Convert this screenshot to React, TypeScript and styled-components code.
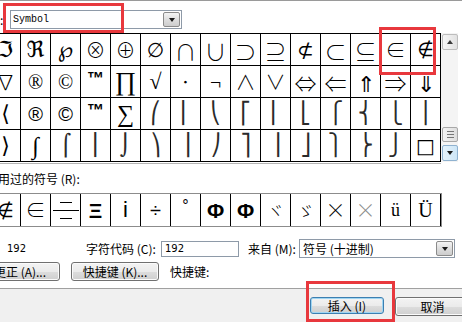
import styled, { createGlobalStyle } from "styled-components";

const GlobalStyle = createGlobalStyle`
  html, body {
    margin: 0;
    padding: 0;
    background: #fff;
  }
  body {
    font-family: "Noto Sans CJK SC", "DejaVu Sans", sans-serif;
  }
`;

const fonts: Record<string, string> = {
  serif: `"Liberation Serif", "DejaVu Serif", "DejaVu Sans", serif`,
  sans: `"Liberation Sans", "DejaVu Sans", sans-serif`,
  math: `"DejaVu Sans", "Liberation Sans", sans-serif`,
  cjk: `"Noto Sans CJK JP", "Noto Sans CJK SC", "DejaVu Sans", sans-serif`,
};

type Glyph = { c: string; f?: string; s?: number; tone?: string; lift?: number; bold?: boolean };

const g = (c: string, f?: string, s?: number, lift?: number): Glyph => ({ c, f, s, lift });
const piece = (c: string): Glyph => ({ c, f: "math", s: 21, tone: "#2a2a2a" });

const table: Glyph[][] = [
  [g("ℑ", "serif", 22), g("ℜ", "serif", 22), g("℘", "serif", 22), g("⊗", "cjk", 20), g("⊕", "cjk", 20), g("∅", "serif", 20), g("∩", "cjk", 22), g("∪", "cjk", 22), g("⊃", "cjk", 22), g("⊇", "cjk", 22), g("⊄", "math", 20), g("⊂", "cjk", 22), g("⊆", "cjk", 22), g("∈", "cjk", 20), g("∉", "math", 19)],
  [g("∇", "cjk", 20), g("®", "serif", 20), g("©", "serif", 20), { c: "™", f: "sans", s: 17, lift: 7, bold: true }, g("∏", "serif", 26), g("√", "serif", 22), g("⋅", "serif", 20), g("¬", "cjk", 20), g("∧", "cjk", 20), g("∨", "cjk", 20), g("⇔", "cjk", 22), g("⇐", "cjk", 22), g("⇑", "cjk", 22), g("⇒", "cjk", 22), g("⇓", "cjk", 22)],
  [g("⟨", "math", 22), g("®", "sans", 20), g("©", "sans", 20), { c: "™", f: "sans", s: 17, lift: 7, bold: true }, g("∑", "serif", 24), piece("⎛"), piece("⎜"), piece("⎝"), piece("⎡"), piece("⎢"), piece("⎣"), piece("⎧"), piece("⎨"), piece("⎩"), piece("⎪")],
  [g("⟩", "math", 22), g("∫", "serif", 24), piece("⌠"), piece("⎮"), piece("⌡"), piece("⎞"), piece("⎟"), piece("⎠"), piece("⎤"), piece("⎥"), piece("⎦"), piece("⎫"), piece("⎬"), piece("⎭"), g("□", "math", 20)],
];

const recent: Glyph[] = [
  g("∉", "math", 19),
  g("∈", "cjk", 20),
  g("", "bars"),
  { c: "Ξ", f: "sans", s: 21, bold: true },
  g("i", "sans", 22),
  g("÷", "sans", 20),
  g("°", "sans", 16, 9),
  { c: "Φ", f: "sans", s: 21, bold: true },
  { c: "Φ", f: "sans", s: 21, bold: true },
  g("ヾ", "cjk", 18),
  g("ゞ", "cjk", 18),
  g("×", "cjk", 20),
  { c: "×", f: "cjk", s: 20, tone: "#8a8a8a" },
  g("ü", "serif", 18),
  g("Ü", "serif", 20),
];

const Frame = styled.div`
  position: relative;
  width: 462px;
  height: 322px;
  overflow: hidden;
  background: #fff;
  display: flex;
  flex-direction: column;
`;

const TopRule = styled.div`
  height: 1px;
  background: #9a9a9a;
`;

const FontRow = styled.div`
  height: 32px;
  box-sizing: border-box;
  padding-top: 9px;
  display: flex;
  align-items: flex-start;
`;

const Colon = styled.span`
  width: 10px;
  font-size: 12px;
  line-height: 19px;
  color: #000;
`;

const Combo = styled.div<{ $w: number }>`
  width: ${({ $w }) => $w}px;
  height: 19px;
  box-sizing: border-box;
  border: 1px solid #8e9aa8;
  background: #fff;
  display: flex;
  align-items: center;
  justify-content: space-between;
`;

const ComboText = styled.span<{ $mono?: boolean }>`
  padding-left: ${({ $mono }) => ($mono ? 2 : 3)}px;
  font-family: ${({ $mono }) =>
    $mono ? `"Liberation Mono", "DejaVu Sans Mono", monospace` : `"Noto Sans CJK SC", sans-serif`};
  font-size: ${({ $mono }) => ($mono ? 10 : 12)}px;
  color: #000;
  white-space: nowrap;
`;

const DropButton = styled.div`
  width: 17px;
  height: 15px;
  margin-right: 1px;
  box-sizing: border-box;
  border: 1px solid #8b8b8b;
  border-radius: 2px;
  background: linear-gradient(#f4f4f4, #dcdcdc 55%, #cdcdcd);
  display: flex;
  align-items: center;
  justify-content: center;
`;

const Arrow = styled.span<{ $up?: boolean }>`
  width: 0;
  height: 0;
  border-left: 3.5px solid transparent;
  border-right: 3.5px solid transparent;
  ${({ $up }) => ($up ? "border-bottom: 4px solid #3a3a3a;" : "border-top: 4px solid #1a1a1a;")}
`;

const SymbolArea = styled.div`
  display: flex;
  height: 129px;
`;

const CharGrid = styled.div`
  margin-left: -9px;
  display: grid;
  grid-template-columns: repeat(15, 29px);
  grid-auto-rows: 31px;
  gap: 1px;
  padding: 1px 1px 1px 0;
  background: #000;
`;

const Cell = styled.div<{ $font?: string; $size?: number; $tone?: string; $lift?: number; $bold?: boolean }>`
  background: #fff;
  display: flex;
  align-items: center;
  justify-content: center;
  overflow: hidden;
  font-family: ${({ $font }) => fonts[$font ?? "serif"] ?? fonts.serif};
  font-size: ${({ $size }) => $size ?? 20}px;
  font-weight: ${({ $bold, $font }) => ($bold ? 700 : $font === "cjk" ? 300 : 400)};
  color: ${({ $tone }) => $tone ?? "#000"};
  line-height: 1;
  padding-bottom: ${({ $lift }) => $lift ?? 0}px;
  box-sizing: border-box;
`;

const Bars = styled.div`
  display: flex;
  flex-direction: column;
  align-items: center;
  gap: 7px;
  width: 100%;
`;

const Bar = styled.span<{ $long?: boolean }>`
  height: 1px;
  width: ${({ $long }) => ($long ? 26 : 12)}px;
  background: #000;
`;

const ScrollBar = styled.div`
  width: 17px;
  box-sizing: border-box;
  padding: 1px 0 1px 1px;
  background: #f4f4f4;
  display: flex;
  flex-direction: column;
`;

const ScrollButton = styled.div<{ $hot?: boolean }>`
  height: 16px;
  box-sizing: border-box;
  border: 1px solid ${({ $hot }) => ($hot ? "#8fb2d0" : "#bdbdbd")};
  border-radius: 2px;
  background: ${({ $hot }) =>
    $hot ? "linear-gradient(90deg, #e4f2fb, #cde6f7)" : "linear-gradient(90deg, #f6f6f6, #e2e2e2)"};
  display: flex;
  align-items: center;
  justify-content: center;
`;

const Track = styled.div`
  flex: 1;
  display: flex;
  flex-direction: column;
  justify-content: flex-end;
  padding-bottom: 3px;
`;

const Thumb = styled.div`
  height: 15px;
  box-sizing: border-box;
  border: 1px solid #a8a8a8;
  border-radius: 2px;
  background: linear-gradient(90deg, #f3f3f3, #dedede);
  display: flex;
  flex-direction: column;
  align-items: center;
  justify-content: center;
  gap: 2px;
`;

const Grip = styled.span`
  width: 7px;
  height: 1px;
  background: #777;
`;

const GridUnderline = styled.div`
  height: 1px;
  width: 441px;
  margin-top: 1px;
  background: #b4b4b4;
`;

const RecentLabel = styled.div`
  margin: 8px 0 0 -14px;
  height: 21px;
  font-size: 12px;
  line-height: 14px;
  color: #000;
  white-space: nowrap;
`;

const RecentRow = styled.div`
  margin-left: -9px;
  width: max-content;
  display: grid;
  grid-template-columns: repeat(15, 29px);
  grid-auto-rows: 32px;
  gap: 1px;
  background: #000;
  border-top: 1px solid #8c8c8c;
  border-bottom: 1px solid #8c8c8c;
  border-right: 1px solid #8c8c8c;
  padding-right: 1px;
`;

const CodeRow = styled.div`
  margin-top: 12px;
  height: 19px;
  display: flex;
  align-items: center;
  padding-left: 7px;
`;

const Field = styled.span<{ $w: number }>`
  width: ${({ $w }) => $w}px;
  flex: none;
  font-size: 12px;
  color: #000;
  white-space: nowrap;
`;

const NumberText = styled.span<{ $w?: number }>`
  width: ${({ $w }) => ($w ? `${$w}px` : "auto")};
  flex: none;
  font-family: "DejaVu Sans", "Liberation Sans", sans-serif;
  font-size: 10px;
  color: #000;
`;

const TextInput = styled.div<{ $w: number }>`
  width: ${({ $w }) => $w}px;
  height: 16px;
  flex: none;
  box-sizing: border-box;
  border: 1px solid #8e9aa8;
  background: #fff;
  display: flex;
  align-items: center;
  padding-left: 3px;
  margin-right: 9px;
`;

const ButtonRow = styled.div`
  margin-top: 4px;
  height: 19px;
  display: flex;
  align-items: center;
  gap: 11px;
`;

const PushButton = styled.button<{ $w: number; $primary?: boolean }>`
  width: ${({ $w }) => $w}px;
  height: ${({ $primary }) => ($primary ? 17 : 19)}px;
  flex: none;
  margin: 0;
  padding: 0;
  box-sizing: border-box;
  border: 1px solid ${({ $primary }) => ($primary ? "#3c7fb1" : "#707070")};
  border-radius: 3px;
  background: linear-gradient(#f3f3f3, #ebebeb 50%, #dddddd 51%, #cfcfcf);
  box-shadow: ${({ $primary }) => ($primary ? "inset 0 0 0 1px #9fd5f2" : "inset 0 0 0 1px #fbfbfb")};
  font-family: "Noto Sans CJK SC", sans-serif;
  font-size: 12px;
  line-height: 1;
  color: #000;
`;

const LeftCut = styled(PushButton)`
  margin-left: -20px;
`;

const ShortcutLabel = styled.span`
  font-size: 12px;
  color: #000;
  white-space: nowrap;
`;

const Separator = styled.div`
  margin-top: 7px;
  height: 1px;
  background: #a0a0a0;
`;

const Footer = styled.div`
  flex: 1;
  background: #f0f0f0;
  display: flex;
  justify-content: flex-end;
  align-items: flex-start;
  padding-top: 8px;
  gap: 11px;
`;

const CancelButton = styled(PushButton)`
  margin-right: -8px;
`;

const Highlight = styled.div<{ $x: number; $y: number; $w: number; $h: number }>`
  position: absolute;
  left: ${({ $x }) => $x}px;
  top: ${({ $y }) => $y}px;
  width: ${({ $w }) => $w}px;
  height: ${({ $h }) => $h}px;
  box-sizing: border-box;
  border: 3px solid #e8383d;
  pointer-events: none;
`;

const GlyphCell = ({ glyph }: { glyph: Glyph }) =>
  glyph.f === "bars" ? (
    <Cell>
      <Bars>
        <Bar />
        <Bar $long />
        <Bar />
      </Bars>
    </Cell>
  ) : (
    <Cell $font={glyph.f} $size={glyph.s} $tone={glyph.tone} $lift={glyph.lift} $bold={glyph.bold}>
      {glyph.c}
    </Cell>
  );

export default function App() {
  return (
    <>
      <GlobalStyle />
      <Frame>
        <TopRule />
        <FontRow>
          <Colon>:</Colon>
          <Combo $w={172}>
            <ComboText $mono>Symbol</ComboText>
            <DropButton>
              <Arrow />
            </DropButton>
          </Combo>
        </FontRow>

        <SymbolArea>
          <CharGrid>
            {table.flat().map((glyph, i) => (
              <GlyphCell key={i} glyph={glyph} />
            ))}
          </CharGrid>
          <ScrollBar>
            <ScrollButton>
              <Arrow $up />
            </ScrollButton>
            <Track>
              <Thumb>
                <Grip />
                <Grip />
                <Grip />
              </Thumb>
            </Track>
            <ScrollButton $hot>
              <Arrow />
            </ScrollButton>
          </ScrollBar>
        </SymbolArea>
        <GridUnderline />

        <RecentLabel>使用过的符号 (R):</RecentLabel>
        <RecentRow>
          {recent.map((glyph, i) => (
            <GlyphCell key={i} glyph={glyph} />
          ))}
        </RecentRow>

        <CodeRow>
          <NumberText $w={79}>192</NumberText>
          <Field $w={75}>字符代码 (C):</Field>
          <TextInput $w={78}>
            <NumberText>192</NumberText>
          </TextInput>
          <Field $w={51}>来自 (M):</Field>
          <Combo $w={156}>
            <ComboText>符号 (十进制)</ComboText>
            <DropButton>
              <Arrow />
            </DropButton>
          </Combo>
        </CodeRow>

        <ButtonRow>
          <LeftCut $w={80}>更正 (A)...</LeftCut>
          <PushButton $w={88}>快捷键 (K)...</PushButton>
          <ShortcutLabel>快捷键:</ShortcutLabel>
        </ButtonRow>

        <Separator />
        <Footer>
          <PushButton $w={74} $primary>
            插入 (I)
          </PushButton>
          <CancelButton $w={75}>取消</CancelButton>
        </Footer>

        <Highlight $x={3} $y={3} $w={121} $h={30} />
        <Highlight $x={379} $y={27} $w={57} $h={48} />
        <Highlight $x={306} $y={281} $w={89} $h={41} />
      </Frame>
    </>
  );
}
